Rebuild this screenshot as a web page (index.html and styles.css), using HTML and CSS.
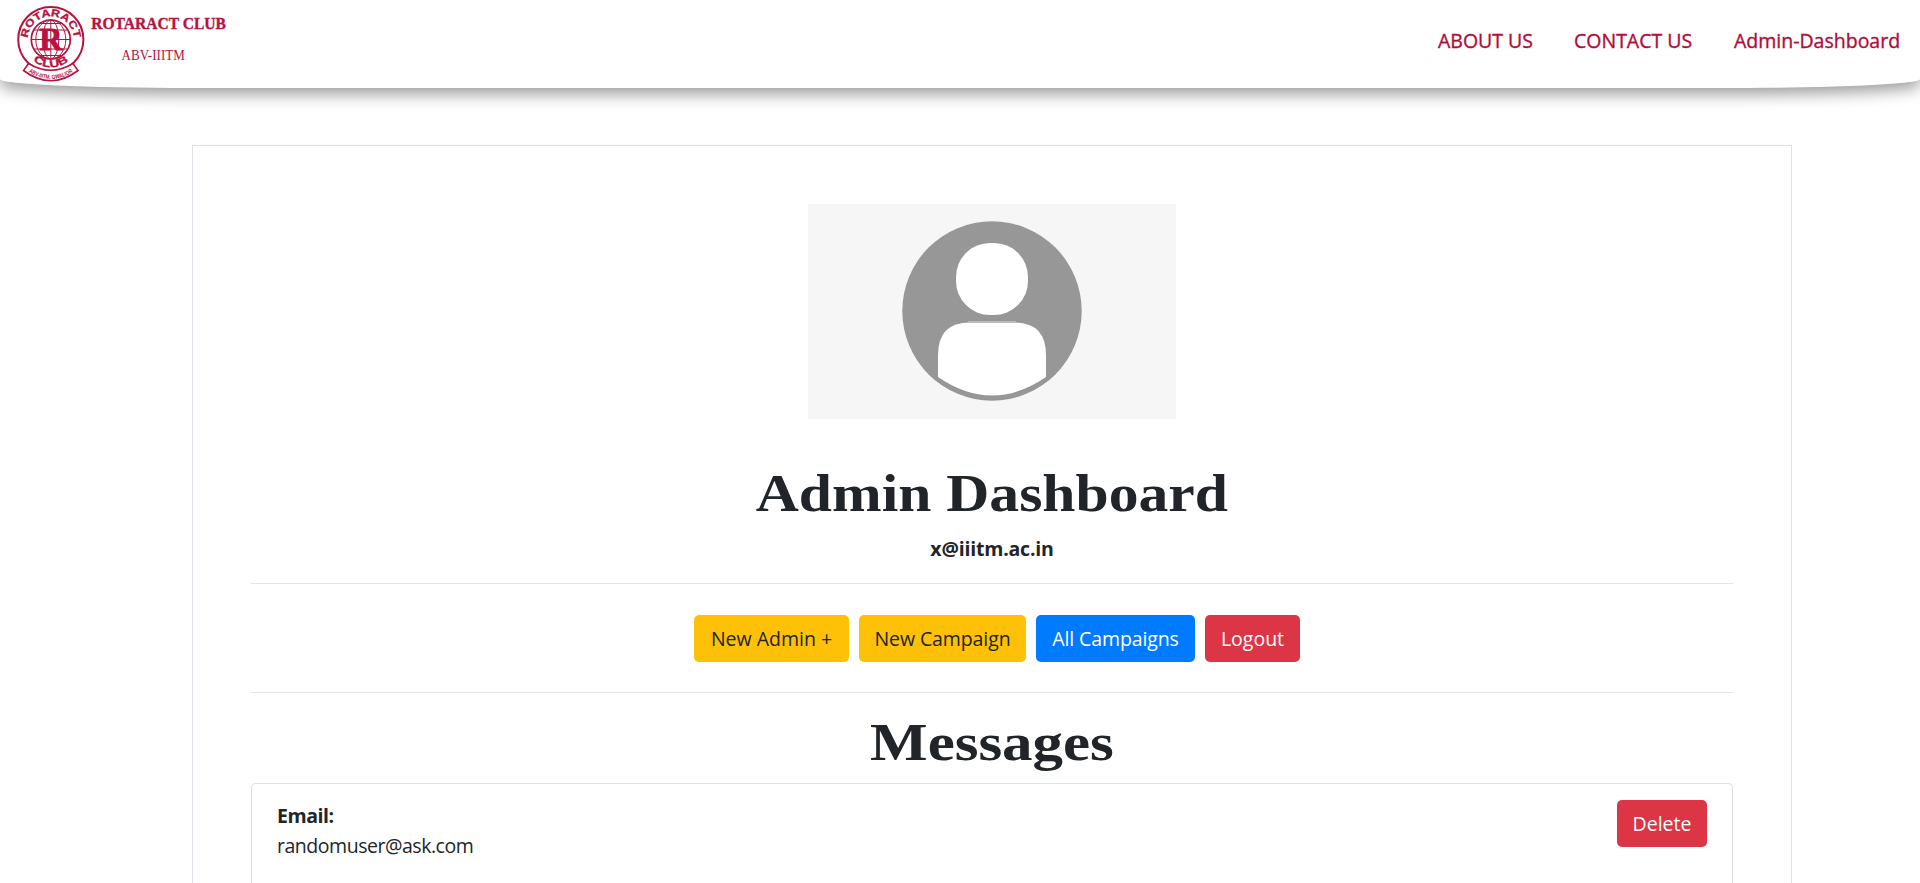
FILE: index.html
```html
<!DOCTYPE html>
<html lang="en">
<head>
<meta charset="utf-8">
<title>Admin Dashboard</title>
<link rel="stylesheet" href="styles.css">
</head>
<body>
<header class="navbar">
  <div class="brand">
    <svg class="emblem" width="70" height="80" viewBox="0 0 70 80" fill="none" stroke="#b9123f">
      <defs>
        <path id="arc-top" d="M11.800 34.500A23 23 0 0 1 57.800 34.500"/>
        <path id="arc-bottom" d="M9.400 46A28 28 0 0 0 60.200 46"/>
        <path id="arc-ribbon" d="M9.500 65Q35 83 60 65"/>
      </defs>
      <circle cx="34.800" cy="34.500" r="32.600" stroke-width="2"/>
      <g stroke-width="1">
        <circle cx="34.800" cy="34.500" r="19.500" stroke-width="1.700"/>
        <ellipse cx="34.800" cy="34.500" rx="15" ry="19.500"/>
        <ellipse cx="34.800" cy="34.500" rx="8" ry="19.500"/>
        <path d="M34.800 15v39M15.300 34.500h39M18 25h33.600M18 44h33.600M24 18.500h21.600M24 50.500h21.600"/>
      </g>
      <text class="emblem-r" x="34.800" y="45">R</text>
      <text class="emblem-ring"><textPath href="#arc-top" startOffset="50%" textLength="69" lengthAdjust="spacingAndGlyphs">ROTARACT</textPath></text>
      <text class="emblem-ring"><textPath href="#arc-bottom" startOffset="50%" textLength="38" lengthAdjust="spacingAndGlyphs">CLUB</textPath></text>
      <path d="M12.500 58.500Q34.800 72 57 58.500L62 65.500Q35 86 7.500 65.500L12.500 58.500Z" fill="#fff" stroke-width="1.600"/>
      <text class="emblem-ribbon"><textPath href="#arc-ribbon" startOffset="50%" textLength="47" lengthAdjust="spacingAndGlyphs">ABV-IIITM, GWALIOR</textPath></text>
    </svg>
    <div class="brand-text">
      <span class="brand-name">ROTARACT CLUB</span>
      <span class="brand-sub">ABV-IIITM</span>
    </div>
  </div>
  <nav class="links">
    <a class="link link-about">ABOUT US</a>
    <a class="link link-contact">CONTACT US</a>
    <a class="link link-admin">Admin-Dashboard</a>
  </nav>
</header>
<main class="panel">
  <svg class="avatar" width="368" height="215" viewBox="0 0 368 215">
    <rect width="368" height="215" fill="#f6f6f6"/>
    <circle cx="184" cy="107" r="89.700" fill="#979797"/>
    <rect x="148" y="39" width="72" height="72" rx="34" fill="#fff"/>
    <path d="M130 173V151Q130 118.500 162 118.500H206Q238 118.500 238 151V173Q184 210 130 173Z" fill="#fff"/>
    <path d="M160 118h48" stroke="#bdbdbd" stroke-width="2"/>
  </svg>
  <h1 class="title title-admin">Admin Dashboard</h1>
  <p class="account">x@iiitm.ac.in</p>
  <div class="actions">
    <button class="btn btn-warning new-admin">New Admin +</button>
    <button class="btn btn-warning new-campaign">New Campaign</button>
    <button class="btn btn-primary all-campaigns">All Campaigns</button>
    <button class="btn btn-danger logout">Logout</button>
  </div>
  <h1 class="title title-messages">Messages</h1>
  <section class="card">
    <div class="message">
      <strong class="label">Email:</strong>
      <span class="email">randomuser@ask.com</span>
    </div>
    <button class="btn btn-danger delete">Delete</button>
  </section>
</main>
</body>
</html>
```

FILE: styles.css
```css
* { box-sizing: border-box; }
body {
  display: flex;
  flex-direction: column;
  margin: 0;
  height: 883px;
  overflow: hidden;
  background: #fff;
  color: #212529;
  font: 19.5px/30px "Open Sans", "Noto Sans", sans-serif;
}
.navbar {
  display: flex;
  flex: none;
  justify-content: space-between;
  height: 88px;
  padding: 0 20px 0 16px;
  background: #fff;
  border-radius: 0 0 10% 10%;
  box-shadow: 0 6px 16px rgba(0, 0, 0, .4);
}
.brand { display: flex; gap: 6px; padding-top: 5px; }
.emblem-r { font: bold 32px "Liberation Serif", serif; fill: #b9123f; stroke: #b9123f; stroke-width: .8; text-anchor: middle; }
.emblem-ring { font: bold 10.5px "Liberation Sans", sans-serif; fill: #b9123f; stroke: #b9123f; stroke-width: .3; text-anchor: middle; }
.emblem-ribbon { font: bold 6px "Liberation Sans", sans-serif; fill: #b9123f; stroke: none; text-anchor: middle; }
.brand-text {
  display: flex;
  flex-direction: column;
  align-items: center;
  width: 134px;
  color: #b9123f;
  font-family: "Liberation Serif", serif;
  white-space: nowrap;
}
.brand-name {
  padding-top: 3px;
  font-size: 17px;
  font-weight: bold;
  line-height: 32px;
  transform: scaleX(.915);
  -webkit-text-stroke: .4px #b9123f;
}
.brand-sub { margin-left: -11px; font-size: 14.5px; line-height: 30px; transform: scaleX(.9); }
.links {
  display: flex;
  gap: 40px;
  padding-top: 26px;
  color: #b30b37;
  white-space: nowrap;
  -webkit-text-stroke: .35px #b30b37;
}
.link-about { width: 96px; }
.link-contact { width: 120px; }
.link-admin { width: 166px; }
.panel {
  display: flex;
  flex: none;
  flex-direction: column;
  align-items: center;
  width: 1600px;
  height: 738px;
  margin: 57px 0 0 192px;
  padding: 58px 58px 0;
  border: 1px solid #dee2e6;
  border-bottom: 0;
}
.avatar { flex: none; }
.title { margin: 0; font: bold 53px/60px "Liberation Serif", serif; white-space: nowrap; }
.title-admin { margin-top: 44px; transform: scaleX(1.125); }
.account { margin: 11px 0 19px; font-weight: bold; letter-spacing: -.2px; }
.actions {
  display: flex;
  flex: none;
  justify-content: center;
  gap: 10px;
  width: 100%;
  height: 110px;
  padding: 31px 0 0 10px;
  border: solid #e5e5e5;
  border-width: 1px 0;
}
.btn {
  height: 47px;
  padding: 0;
  border: 0;
  border-radius: 5px;
  color: #fff;
  font: inherit;
  white-space: nowrap;
}
.btn-warning { background: #ffc107; color: #212529; }
.btn-primary { background: #007bff; }
.btn-danger { background: #dc3545; }
.new-admin { width: 155px; }
.new-campaign { width: 167px; letter-spacing: -.1px; }
.all-campaigns { width: 159px; letter-spacing: -.1px; }
.logout { width: 95px; }
.title-messages { margin-top: 19px; transform: scaleX(1.15); }
.card {
  display: flex;
  flex: none;
  justify-content: space-between;
  width: 100%;
  height: 101px;
  margin-top: 11px;
  padding: 16px 25px 0;
  border: 1px solid #dfdfdf;
  border-bottom: 0;
  border-radius: 5px 5px 0 0;
}
.message { display: flex; flex-direction: column; padding-top: 1px; letter-spacing: -.47px; }
.delete { width: 90px; }
```
